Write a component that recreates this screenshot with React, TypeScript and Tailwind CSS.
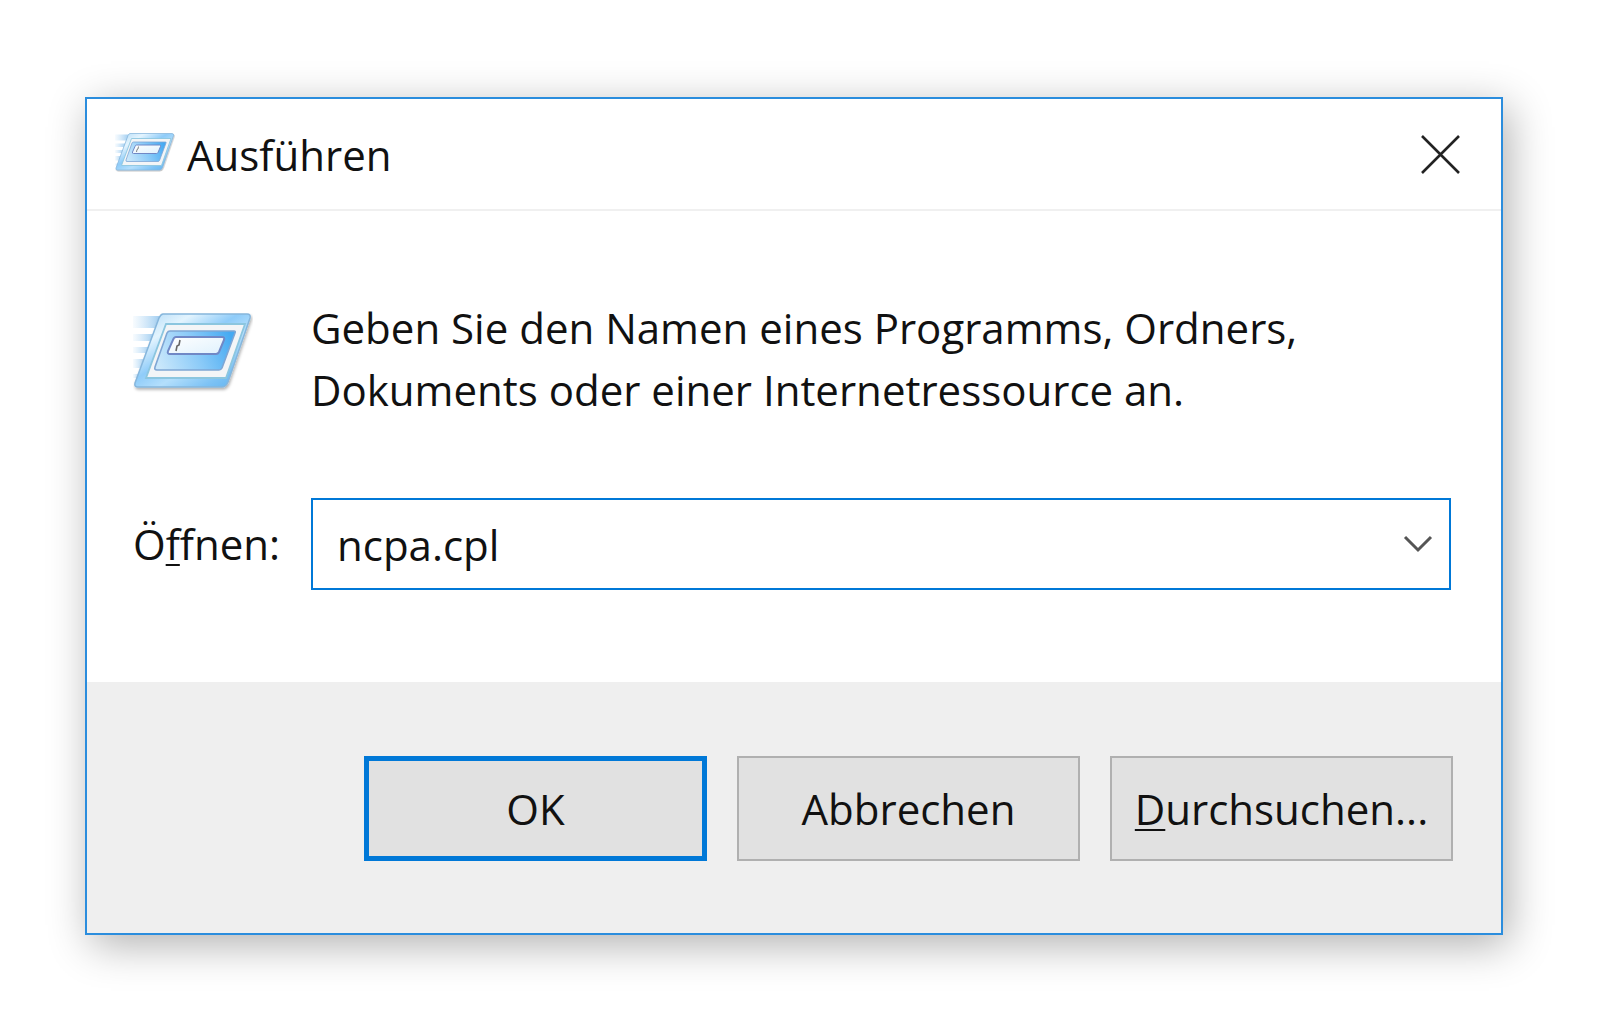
import { useState } from "react";

function RunIcon({ id, className }: { id: string; className: string }) {
  return (
    <svg viewBox="0 0 120 80" className={className} aria-hidden="true">
      <defs>
        <linearGradient id={`${id}-frame`} x1="0" y1="0" x2="1" y2="1">
          <stop offset="0" stopColor="#a9d6f6" />
          <stop offset="0.25" stopColor="#e3f4fe" />
          <stop offset="0.45" stopColor="#8fccf9" />
          <stop offset="0.6" stopColor="#b4dffc" />
          <stop offset="0.8" stopColor="#7cc2f5" />
          <stop offset="1" stopColor="#58aeed" />
        </linearGradient>
        <linearGradient id={`${id}-screen`} x1="0" y1="0.6" x2="1" y2="0.4">
          <stop offset="0" stopColor="#c9e7fb" />
          <stop offset="0.5" stopColor="#8ccbf8" />
          <stop offset="1" stopColor="#46aaf2" />
        </linearGradient>
        <linearGradient id={`${id}-field`} x1="0" y1="0" x2="1" y2="1">
          <stop offset="0" stopColor="#ffffff" />
          <stop offset="1" stopColor="#dff1fd" />
        </linearGradient>
        <linearGradient id={`${id}-trail`} x1="0" y1="0" x2="1" y2="0">
          <stop offset="0" stopColor="#b5daf6" stopOpacity="0.1" />
          <stop offset="1" stopColor="#9ccbf0" />
        </linearGradient>
        <filter id={`${id}-shadow`} x="-10%" y="-10%" width="120%" height="130%">
          <feDropShadow dx="1" dy="2" stdDeviation="1.5" floodColor="#000" floodOpacity="0.3" />
        </filter>
      </defs>
      <g fill={`url(#${id}-trail)`}>
        <path d="M0 3h28l-4 12H0z" />
        <path d="M0 21h22l-2 7H0z" />
        <path d="M0 34h18l-2 6H0z" />
        <path d="M0 46h13l-3 9H0z" />
        <path d="M0 61h8l-1 4H0z" />
      </g>
      <path
        d="M30 1h84q4 0 3 4L95 69q-2 5-6 5H5q-4 0-3-4L26 5q2-4 4-4z"
        fill={`url(#${id}-frame)`}
        stroke="#86b6dc"
        strokeWidth="1.5"
        filter={`url(#${id}-shadow)`}
      />
      <path d="M33 11h79L93 65H13z" fill="#f3f5f7" stroke="#8cc6df" strokeWidth="1.8" />
      <path d="M37 18h64q2 0 1 2L89 55q-1 2-3 2H24q-3 0-2-3L34 20q1-2 3-2z" fill={`url(#${id}-screen)`} stroke="#7fa6d4" strokeWidth="1.6" />
      <path d="M43 24h46q3 0 2 3l-5 12q-1 2-3 2H37q-3 0-2-3l5-11q1-3 3-3z" fill={`url(#${id}-field)`} stroke="#7088c6" strokeWidth="2" />
      <path d="M47 27l-1 5-2 1-1 5" stroke="#666" strokeWidth="1.6" fill="none" />
    </svg>
  );
}

export default function App() {
  const [command, setCommand] = useState("ncpa.cpl");

  return (
    <main className="bg-white pt-[97px] pr-[97px] pb-[95px] pl-[85px] font-['Open_Sans','Noto_Sans',sans-serif] text-[42px] leading-[62px] text-[#111] [font-variant-ligatures:none]">
      <div
        role="dialog"
        aria-labelledby="run-title"
        className="border-2 border-[#2b8ddd] bg-white shadow-[6px_10px_40px_rgba(0,0,0,0.31)]"
      >
        <header className="flex items-center border-b-2 border-[#f0f0f0] pt-[25px] pr-10 pb-[23px] pl-7">
          <RunIcon id="run-small" className="mb-1 h-10 w-15" />
          <h1 id="run-title" className="ml-3">Ausführen</h1>
          <button type="button" aria-label="Schließen" className="ml-auto">
            <svg viewBox="0 0 40 40" className="size-10" fill="none" stroke="#222" strokeWidth="2.6">
              <path d="M1 1l37 37M38 1L1 38" />
            </svg>
          </button>
        </header>

        <form onSubmit={(e) => e.preventDefault()}>
          <div className="grid grid-cols-[178px_1fr] gap-y-[77px] pt-[86px] pr-[50px] pb-[92px] pl-[46px]">
            <RunIcon id="run-large" className="mt-4 h-20 w-30" />
            <p>
              Geben Sie den Namen eines Programms, Ordners,
              <br />
              Dokuments oder einer Internetressource an.
            </p>

            <label htmlFor="command" className="self-center">
              Ö<span className="underline decoration-2 underline-offset-4">f</span>fnen:
            </label>
            <div className="flex items-center border-2 border-[#0078d7] bg-white pr-4">
              <input
                id="command"
                type="text"
                value={command}
                onChange={(e) => setCommand(e.target.value)}
                className="h-[88px] min-w-0 flex-1 pl-6 outline-none"
              />
              <button type="button" aria-label="Verlauf anzeigen">
                <svg viewBox="0 0 30 18" className="h-[18px] w-[30px]" fill="none" stroke="#555" strokeWidth="3">
                  <path d="M2 2l13 13L28 2" />
                </svg>
              </button>
            </div>
          </div>

          <div className="flex justify-end gap-[30px] bg-[#efefef] pt-[74px] pr-12 pb-[72px]">
            <button type="submit" className="h-[105px] w-[343px] border-5 border-[#0078d7] bg-[#e1e1e1]">
              OK
            </button>
            <button type="button" className="h-[105px] w-[343px] border-2 border-[#b0b0b0] bg-[#e1e1e1]">
              Abbrechen
            </button>
            <button type="button" className="h-[105px] w-[343px] border-2 border-[#b0b0b0] bg-[#e1e1e1]">
              <span className="underline decoration-2 underline-offset-4">D</span>urchsuchen...
            </button>
          </div>
        </form>
      </div>
    </main>
  );
}
